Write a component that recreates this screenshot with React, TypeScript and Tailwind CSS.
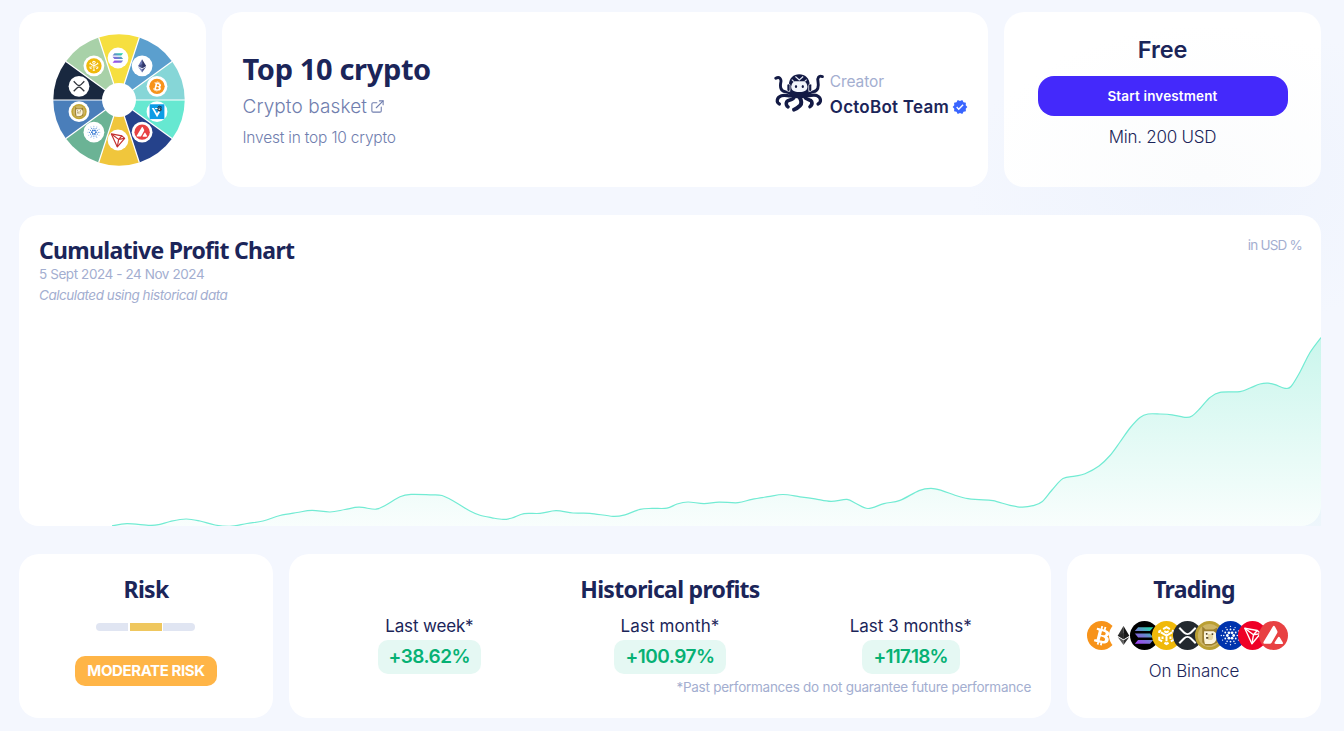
import type { ReactNode } from "react";
import { ExternalLink } from "lucide-react";
import { MdVerified } from "react-icons/md";
import { FaBtc } from "react-icons/fa";

type CoinId = "btc" | "eth" | "sol" | "bnb" | "xrp" | "doge" | "ada" | "trx" | "avax" | "ven";

const HEADING = "font-['Noto_Sans','Open_Sans',sans-serif] font-bold text-[#1b2559]";

/* Coin glyphs live on a 24x24 grid centred on 12,12. */
function Glyph({ id, flat }: { id: CoinId; flat?: boolean }) {
  const ink = flat ? "#fff" : undefined;
  switch (id) {
    case "btc":
      return <g transform="rotate(14 12 12)"><FaBtc x={4.8} y={4.2} width={14.4} height={15.6} color="#fff" /></g>;
    case "eth":
      return (
        <g>
          <path d="M12 4.2 7.2 12.2 12 15Z" fill={flat ? "#343434" : "#6b78b5"} />
          <path d="M12 4.2 16.8 12.2 12 15Z" fill={flat ? "#141414" : "#30386e"} />
          <path d="M7.2 13.2 12 19.8 12 16Z" fill={flat ? "#5c5c5c" : "#8390c6"} />
          <path d="M16.8 13.2 12 19.8 12 16Z" fill={flat ? "#2f2f2f" : "#454f8b"} />
          <path d="M12 9.9 7.2 12.2 12 15 16.8 12.2Z" fill={flat ? "#222" : "#30386e"} opacity=".6" />
        </g>
      );
    case "sol":
      return (
        <g fill="url(#solana)" transform={flat ? "translate(-1.6 -1.4) scale(1.12)" : undefined}>
          <path d="M7.4 5.8h11.2l-2.4 2.9H5Z" />
          <path d="M5 10.5h11.2l2.4 2.9H7.4Z" />
          <path d="M7.4 15.2h11.2l-2.4 2.9H5Z" />
        </g>
      );
    case "bnb":
      return (
        <g fill="none" stroke="#fff" strokeWidth="1.7" strokeLinejoin="miter">
          <path d="M9.2 6.7 12 5.1l2.8 1.6M6 10V8.6l1.5-.9M18 10V8.6l-1.5-.9M6 13v2.4l2.4 1.4M18 13v2.4l-2.4 1.4M10.3 18l1.7 1 1.7-1" />
          <path d="m7.4 9.4 4.6 2.7 4.6-2.7M12 12.1v4.6M8.7 12.8v2M15.3 12.8v2M10.2 8.4l1.8 1 1.8-1" />
        </g>
      );
    case "xrp":
      return (
        <g fill="none" stroke={ink ?? "#30343b"} strokeWidth="1.7">
          <path d="m5.2 5.6 3.9 3.9c1.6 1.6 4.2 1.6 5.8 0l3.9-3.9" />
          <path d="m5.2 18.4 3.9-3.9c1.6-1.6 4.2-1.6 5.8 0l3.9 3.9" />
        </g>
      );
    case "doge":
      return (
        <g>
          <circle cx="12" cy="12" r="9.6" fill="#cdb565" />
          <path d="M6 4.4 8.8 7h6.4l3.2-1.6.4 12.4-5.2 2.4H8.6L6 17.6Z" fill="#9c7f30" />
          <path d="M7.6 8.4h6.8c2.6 0 3.4 2 3.4 4.6 0 4-2 6-5.4 6H8.2c-.8-2.8-1-7.4-.6-10.6Z" fill="#fbf4dd" />
          <path d="M10.6 10.8h2.6c1.4 0 1.8 1 1.8 2.2 0 1.8-.8 2.8-2.4 2.8h-2Z" fill="#e6d7a4" />
          <path d="M9 10h1.3v1.3H9Zm4.8.2h1.3v1.3h-1.3Zm-4.6 3h1.8v1.4H9.2Z" fill="#55472a" />
        </g>
      );
    case "ada": {
      const rings: [number, number, number][] = [[2.6, 1.15, 6], [5, 0.75, 6], [5.6, 0.65, 6], [7.6, 0.55, 12]];
      return (
        <g fill={ink ?? "#2a70d0"}>
          {rings.flatMap(([radius, dot, n], ring) =>
            Array.from({ length: n }, (_, i) => {
              const a = ((i + (ring === 1 ? 0.5 : 0)) / n) * Math.PI * 2;
              return <circle key={`${ring}-${i}`} cx={12 + radius * Math.cos(a)} cy={12 + radius * Math.sin(a)} r={dot} />;
            }),
          )}
        </g>
      );
    }
    case "trx":
      return (
        <g transform={flat ? undefined : "translate(-3.8 -3.6) scale(1.3)"} fill="none" stroke={ink ?? "#c4312f"} strokeWidth="1.15" strokeLinejoin="round">
          <path d="M5.6 6 16 7.9 18.7 10.4 11.5 18.8Z" />
          <path d="m5.6 6 7.2 5.4L16 7.9M12.8 11.4l5.9-1M12.8 11.4l-1.3 7.4" />
        </g>
      );
    case "avax":
      return (
        <g fill="#fff" transform="translate(-1.2 -1.4) scale(1.12)">
          <path d="M11.2 5.5c.5-.9 1.2-.9 1.7 0l1.6 3c.3.6.3 1.1 0 1.7l-4 7c-.3.6-.8.9-1.5.9H5.4c-1 0-1.4-.6-.9-1.5Z" />
          <path d="M14.9 13.6c.5-.9 1.2-.9 1.7 0l2 3.3c.5.8.2 1.3-.8 1.3h-4.2c-1 0-1.4-.5-.8-1.4Z" />
        </g>
      );
    case "ven":
      return (
        <g>
          <path d="M5.3 7.3h2.5l4.2 7.2 2-3.6 2.1 1.2-4 7Z" fill="#fff" />
          <path d="M9 7.3h4v1.4H9.9Z" fill="#fff" />
          <circle cx="15.3" cy="9" r="2.8" fill="#39454d" />
          <circle cx="15" cy="9" r="1" fill="#dfe8ec" />
          <path d="m12.6 6.7 2.2-1.8 3.6 1.5" fill="none" stroke="#223" strokeWidth="1.1" />
        </g>
      );
  }
}

const TAU = Math.PI * 2;
const wheel: { id: CoinId; slice: string; disc: string }[] = [
  { id: "sol", slice: "#f6df3f", disc: "#fff" },
  { id: "eth", slice: "#5b9fce", disc: "#fff" },
  { id: "btc", slice: "#86d6d7", disc: "#f7931a" },
  { id: "ven", slice: "#66e8d1", disc: "#fff" },
  { id: "avax", slice: "#25428b", disc: "#e84142" },
  { id: "trx", slice: "#f0c63c", disc: "#fff" },
  { id: "ada", slice: "#6bb395", disc: "#fff" },
  { id: "doge", slice: "#4a7eba", disc: "#c2a633" },
  { id: "xrp", slice: "#19283f", disc: "#fff" },
  { id: "bnb", slice: "#a8d1a8", disc: "#f0b90b" },
];

function BasketWheel() {
  const at = (turn: number, r: number) => `${(r * Math.sin(turn * TAU)).toFixed(2)} ${(-r * Math.cos(turn * TAU)).toFixed(2)}`;
  return (
    <svg width="132" height="132" viewBox="-66 -66 132 132" className="ml-[13px] shrink-0">
      {wheel.map((w, i) => (
        <path
          key={w.id}
          d={`M0 0L${at((i - 0.5) / 10, 65.7)}A65.7 65.7 0 0 1 ${at((i + 0.5) / 10, 65.7)}Z`}
          fill={w.slice}
        />
      ))}
      {wheel.map((w, i) => (
        <path key={w.id} d={`M0 0L${at((i + 0.5) / 10, 66)}`} stroke="#fff" strokeWidth="1.2" />
      ))}
      <circle r="17" fill="#fff" />
      {wheel.map((w, i) => {
        const x = -1 + 41 * Math.sin((i / 10) * TAU);
        const y = -1 - 41 * Math.cos((i / 10) * TAU);
        const small = w.disc !== "#fff";
        const k = small ? 0.64 : w.id === "eth" ? 0.84 : 0.78;
        return (
          <g key={w.id} transform={`translate(${x} ${y})`}>
            <circle r="10.4" fill="#fff" />
            {small && <circle r="7.7" fill={w.disc} />}
            {w.id === "ven" && <rect x="-7.4" y="-7.4" width="14.8" height="14.8" fill="#0d9ce6" />}
            <g transform={`scale(${k}) translate(-12 -12)`}>
              <Glyph id={w.id} />
            </g>
          </g>
        );
      })}
    </svg>
  );
}

function Octopus() {
  return (
    <svg width="51" height="40" viewBox="0 0 51 40" className="shrink-0">
      <g fill="none" stroke="#131a45" strokeLinecap="round" strokeLinejoin="round">
        <path strokeWidth="2.9" d="M1.8 5.2C5.4 3 7.6 6 6.8 9.4c-1 5 .1 8.6 4.2 9.2 3 .5 5 1.2 6.8 2.8" />
        <path strokeWidth="2.9" d="M48.4 3.6c-3.6-1.6-5.2 1.2-4.4 5 1 5.4-.1 9.4-4.4 10-2.8.5-4.6 1.4-6.4 3" />
        <path strokeWidth="3.2" d="M19 22.4c-4 1.6-7-1-11.6.4C2.6 24.4 2 29.4 5.4 31" />
        <path strokeWidth="3.2" d="M31.4 22.4c3.8 1.4 7.2-1.4 11.4.2 4.6 2 4.8 6.6 1.2 8.4" />
        <path strokeWidth="3.6" d="M20.4 23.4c-1.4 4.6-6 2.6-7.6 5.2-1.2 2.2-.2 4.6 1.2 5.2" />
        <path strokeWidth="3.6" d="M30.4 23.4c1.8 4.2 6 2.4 7.2 5 .8 2-.2 4.2-1.6 5.2" />
        <path strokeWidth="4" d="M24.8 23c3 4.6 3.4 7.4 1.2 9.6-1.6 1.6-2.8 3.2-6 4" />
      </g>
      <path d="M14.8 12C15.2 4.8 19.4 1.3 25.2 1.3S35.4 4.8 35.8 12l-1.8 10c-3.2 4.6-14 4.6-17.2 0Z" fill="#131a45" />
      <path d="M17.2 13.4c.6-3 1.8-4.6 3.4-5.2h9.4c1.8.6 3 2.2 3.4 5.2.2 3.8-3 5.6-8.1 5.6s-8.3-1.8-8.1-5.6Z" fill="#f1f4fb" />
      <path d="m21.4 3.5 3.9 3.4 3.9-3.4M17.8 6.7l2.2 2M32.7 6.7l-2.2 2" stroke="#e9edf8" strokeWidth="1.1" fill="none" />
      <rect x="13" y="11" width="3" height="7.4" rx="1.4" fill="#131a45" stroke="#fff" strokeWidth=".7" />
      <rect x="34.7" y="11" width="3" height="7.4" rx="1.4" fill="#131a45" stroke="#fff" strokeWidth=".7" />
      <ellipse cx="22" cy="13.4" rx="1.1" ry="1.5" fill="#131a45" />
      <ellipse cx="28.8" cy="13.4" rx="1.1" ry="1.5" fill="#131a45" />
    </svg>
  );
}

/* Samples of the profit curve, relative to the chart card's top-left corner. */
const curve: [number, number][] = [
  [93, 310.8], [108, 308.7], [131, 310.4], [141, 309.4], [151, 306.5], [167, 304], [181, 306], [196, 310], [211, 311.4],
  [228, 308.5], [244, 306], [261, 300.5], [278, 297.5], [293, 295.4], [311, 297], [326, 294.5], [340, 292.2], [357, 294.2],
  [367, 290], [381, 281.8], [392, 279.4], [411, 279.8], [423, 280.5], [436, 287], [451, 296], [461, 300.3], [473, 302.8],
  [484, 304.4], [493, 303], [505, 298.6], [521, 298.4], [537, 295.7], [554, 298], [571, 298.3], [594, 301.3], [606, 299.8],
  [621, 294.4], [633, 293.4], [648, 293.2], [658, 289], [669, 287], [685, 288.6], [700, 287.1], [719, 287.7], [733, 284.3],
  [749, 281.7], [764, 279.5], [781, 281.8], [796, 283.9], [812, 286.4], [828, 284.4], [837, 288.5], [849, 293.5],
  [865, 288.6], [881, 285.4], [900, 275.6], [912, 273.4], [923, 275.6], [936, 280.2], [949, 283.7], [960, 284.6], [974, 285.7],
  [991, 290.4], [1003, 292.1], [1014, 290.7], [1023, 286.8], [1033, 275], [1044, 263.6], [1056, 261.2], [1066, 258.7],
  [1080, 251], [1091, 240.5], [1101, 227], [1111, 213], [1121, 202.5], [1129, 199], [1141, 199], [1153, 199.8], [1167, 202.4],
  [1173, 201], [1181, 193.5], [1191, 182.5], [1201, 177.3], [1221, 176.6], [1231, 173], [1241, 169], [1249, 168.2],
  [1256, 169.6], [1266, 173.3], [1272, 171.5], [1281, 157], [1291, 137.5], [1302, 122.5],
];

function smooth(pts: [number, number][]) {
  let d = `M${pts[0][0]} ${pts[0][1]}`;
  for (let i = 0; i < pts.length - 1; i++) {
    const [a, b, c, e] = [pts[i - 1] ?? pts[i], pts[i], pts[i + 1], pts[i + 2] ?? pts[i + 1]];
    d += `C${b[0] + (c[0] - a[0]) / 6} ${b[1] + (c[1] - a[1]) / 6} ${c[0] - (e[0] - b[0]) / 6} ${c[1] - (e[1] - b[1]) / 6} ${c[0]} ${c[1]}`;
  }
  return d;
}

function ProfitCurve() {
  const line = smooth(curve);
  return (
    <svg width="1302" height="311" viewBox="0 0 1302 311" className="absolute inset-0">
      <defs>
        <linearGradient id="area" gradientUnits="userSpaceOnUse" x1="0" y1="122" x2="0" y2="311">
          <stop offset="0" stopColor="#5fe3c6" stopOpacity=".33" />
          <stop offset="1" stopColor="#5fe3c6" stopOpacity=".04" />
        </linearGradient>
      </defs>
      <path d={`${line}L1302 311L93 311Z`} fill="url(#area)" />
      <path d={line} fill="none" stroke="#72ebd3" strokeWidth="1.2" />
    </svg>
  );
}

const pairs: { id: CoinId; bg: string }[] = [
  { id: "btc", bg: "#f7931a" },
  { id: "eth", bg: "#ffffff" },
  { id: "sol", bg: "#000000" },
  { id: "bnb", bg: "#f0b90b" },
  { id: "xrp", bg: "#23292f" },
  { id: "doge", bg: "#ba9f33" },
  { id: "ada", bg: "#0033ad" },
  { id: "trx", bg: "#ef0027" },
  { id: "avax", bg: "#e84142" },
];

const profits = [
  { label: "Last week*", value: "+38.62%", pill: "w-[103px] tracking-[-0.5px]", name: "tracking-[-0.15px]" },
  { label: "Last month*", value: "+100.97%", pill: "w-[112px] tracking-[-0.5px]", name: "tracking-[0.1px]" },
  { label: "Last 3 months*", value: "+117.18%", pill: "w-[98px] tracking-[-0.85px]", name: "tracking-[0px]" },
];

function Card({ className, children }: { className: string; children: ReactNode }) {
  return <section className={`rounded-[20px] ${className}`}>{children}</section>;
}

export default function App() {
  return (
    <main className="h-[731px] w-[1344px] overflow-hidden bg-[#f4f7fe] bg-[radial-gradient(ellipse_240px_160px_at_1205px_175px,#eef3fd,#f4f7fe)] pt-3 pr-[23px] pl-[19px] font-['Inter',sans-serif] text-[#1b2559]">
      <svg width="0" height="0" className="absolute">
        <defs>
          <linearGradient id="solana" gradientUnits="userSpaceOnUse" x1="17" y1="5" x2="7" y2="19">
            <stop offset="0" stopColor="#19e5a4" />
            <stop offset=".5" stopColor="#6f80cf" />
            <stop offset="1" stopColor="#a33cf5" />
          </linearGradient>
        </defs>
      </svg>

      <div className="flex h-[175px] gap-4">
        <Card className="flex w-[187px] items-center justify-center bg-white">
          <BasketWheel />
        </Card>

        <Card className="flex w-[766px] justify-between bg-white pr-[20px] pl-[20.5px]">
          <div className="pt-[37px]">
            <h1 className={`${HEADING} text-[29px] leading-10 tracking-[-0.35px]`}>Top 10 crypto</h1>
            <div className="mt-[3px] flex items-center gap-[3px] text-[19px] leading-[30px] font-light tracking-[0.1px] text-[#707eae]">
              <span>Crypto basket</span>
              <ExternalLink size={15} strokeWidth={1.7} className="mb-px" />
            </div>
            <p className="mt-1 text-[15.5px] leading-6 font-light tracking-[-0.2px] text-[#707eae]">Invest in top 10 crypto</p>
          </div>
          <div className="flex pt-[58px]">
            <div className="pt-[3px]">
              <Octopus />
            </div>
            <div className="ml-[5px]">
              <p className="text-[15.5px] leading-6 tracking-[-0.1px] text-[#a3aed0]">Creator</p>
              <div className="flex items-center gap-[3px]">
                <span className="text-[17px] leading-[26px] font-semibold tracking-[0.25px]">OctoBot Team</span>
                <MdVerified size={16} color="#3965ff" />
              </div>
            </div>
          </div>
        </Card>

        <Card className="flex w-[317px] flex-col items-center bg-[radial-gradient(ellipse_230px_150px_at_200px_163px,#fbfcfd,#ffffff)] pt-[22px]">
          <h2 className="text-[23.5px] leading-8 font-semibold tracking-[-0.1px]">Free</h2>
          <button className="mt-[10px] h-10 w-[250px] rounded-2xl bg-[#4429fb] text-[13.5px] font-semibold tracking-[0.15px] text-white">
            Start investment
          </button>
          <p className="mt-[7px] text-[17px] leading-7 font-light tracking-[-0.25px]">Min. 200 USD</p>
        </Card>
      </div>

      <Card className="relative mt-7 h-[311px] bg-white">
        <ProfitCurve />
        <div className="relative flex justify-between px-5 pt-5">
          <div>
            <h2 className={`${HEADING} mt-[-1px] mb-px text-[23px] leading-8 tracking-[-0.7px]`}>Cumulative Profit Chart</h2>
            <p className="text-[13.5px] leading-[15px] tracking-[-0.42px] text-[#a3aed0]">5 Sept 2024 - 24 Nov 2024</p>
            <p className="mt-[3px] text-[13.5px] leading-[21px] tracking-[-0.45px] text-[#a3aed0] italic">Calculated using historical data</p>
          </div>
          <p className="mr-[-1px] text-[13.5px] leading-[21px] tracking-[-0.8px] text-[#a3aed0]">in USD %</p>
        </div>
      </Card>

      <div className="mt-7 flex h-[164px] gap-4">
        <Card className="flex w-[254px] flex-col items-center bg-white pt-5">
          <h2 className={`${HEADING} mt-[-1px] mb-px text-[23px] leading-8 tracking-[-0.7px]`}>Risk</h2>
          <div className="mt-[17px] mr-px flex h-2 gap-[1.5px] overflow-hidden rounded-full">
            <div className="w-8 bg-[#e0e5f2]" />
            <div className="w-8 bg-[#efc75e]" />
            <div className="w-8 bg-[#e0e5f2]" />
          </div>
          <div className="mt-[25px] flex h-[30px] w-[142px] items-center justify-center rounded-[10px] bg-[#ffb547] text-[15px] font-bold tracking-[-0.4px] whitespace-nowrap text-white">
            MODERATE RISK
          </div>
        </Card>

        <Card className="w-[762px] bg-white px-5 pt-5">
          <h2 className={`${HEADING} mt-[-1px] text-center text-[23px] leading-8 tracking-[-0.7px]`}>Historical profits</h2>
          <div className="mt-[7px] grid grid-cols-3">
            {profits.map((p) => (
              <div key={p.label} className="flex flex-col items-center">
                <span className={`text-[17px] leading-7 ${p.name}`}>{p.label}</span>
                <span className={`flex h-[34px] items-center justify-center rounded-[10px] bg-[#e5f8f3] pt-px text-[19px] font-semibold text-[#06b174] ${p.pill}`}>
                  {p.value}
                </span>
              </div>
            ))}
          </div>
          <p className="mt-[3px] text-right text-[13.5px] leading-5 tracking-[-0.26px] text-[#a3aed0]">
            *Past performances do not guarantee future performance
          </p>
        </Card>

        <Card className="flex w-[254px] flex-col items-center bg-white pt-5">
          <h2 className={`${HEADING} mt-[-1px] mb-px text-[23px] leading-8 tracking-[-0.7px]`}>Trading</h2>
          <div className="mt-[15px] mr-[13px] flex">
            {pairs.map((c, i) => (
              <svg key={c.id} width="29" height="29" viewBox="0 0 24 24" className={i ? "-ml-[7.5px]" : ""}>
                <circle cx="12" cy="12" r="12" fill={c.bg} />
                <Glyph id={c.id} flat />
              </svg>
            ))}
          </div>
          <p className="mt-[7px] text-[17px] leading-7 font-light tracking-[-0.1px]">On Binance</p>
        </Card>
      </div>
    </main>
  );
}
